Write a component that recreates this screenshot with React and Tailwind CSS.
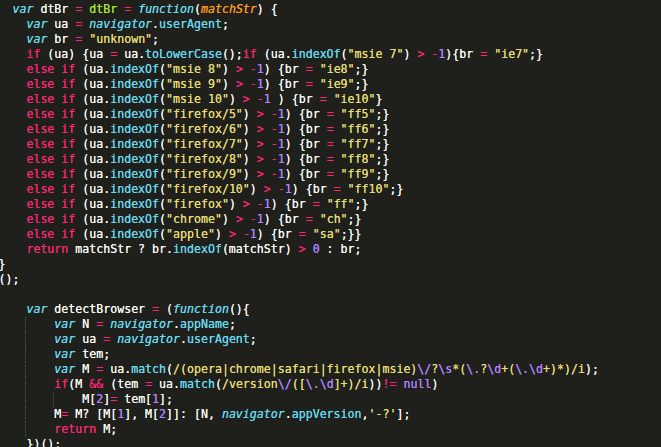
const C = {
  w: 'text-[#f8f8f2]',
  k: 'text-[#f92672]',
  s: 'text-[#e6db74]',
  n: 'text-[#ae81ff]',
  t: 'text-[#66d9ef] italic',
  f: 'text-[#66d9ef]',
  g: 'text-[#a6e22e]',
  p: 'text-[#fd971f] italic',
};

const elseIf = (str, val, tail = ') {br ', end = ';}') => [
  ['w', '    '], ['k', 'else'], ['w', ' '], ['k', 'if'], ['w', ' (ua.'], ['f', 'indexOf'],
  ['w', '('], ['s', str], ['w', ') '], ['k', '>'], ['w', ' '], ['k', '-'], ['n', '1'],
  ['w', tail], ['k', '='], ['w', ' '], ['s', val], ['w', end],
];

// g: number of indent guides drawn inside the leading whitespace
const lines = [
  { t: [['w', '  '], ['t', 'var'], ['w', ' dtBr '], ['k', '='], ['w', ' '], ['g', 'dtBr'], ['w', ' '], ['k', '='], ['w', ' '], ['t', 'function'], ['w', '('], ['p', 'matchStr'], ['w', ') {']] },
  { t: [['w', '    '], ['t', 'var'], ['w', ' ua '], ['k', '='], ['w', ' '], ['t', 'navigator'], ['w', '.'], ['f', 'userAgent'], ['w', ';']] },
  { t: [['w', '    '], ['t', 'var'], ['w', ' br '], ['k', '='], ['w', ' '], ['s', '"unknown"'], ['w', ';']] },
  { t: [['w', '    '], ['k', 'if'], ['w', ' (ua) {ua '], ['k', '='], ['w', ' ua.'], ['f', 'toLowerCase'], ['w', '();'], ['k', 'if'], ['w', ' (ua.'], ['f', 'indexOf'], ['w', '('], ['s', '"msie 7"'], ['w', ') '], ['k', '>'], ['w', ' '], ['k', '-'], ['n', '1'], ['w', '){br '], ['k', '='], ['w', ' '], ['s', '"ie7"'], ['w', ';}']] },
  { t: elseIf('"msie 8"', '"ie8"') },
  { t: elseIf('"msie 9"', '"ie9"') },
  { t: elseIf('"msie 10"', '"ie10"', ' ) {br ', '}') },
  { t: elseIf('"firefox/5"', '"ff5"') },
  { t: elseIf('"firefox/6"', '"ff6"') },
  { t: elseIf('"firefox/7"', '"ff7"') },
  { t: elseIf('"firefox/8"', '"ff8"') },
  { t: elseIf('"firefox/9"', '"ff9"') },
  { t: elseIf('"firefox/10"', '"ff10"') },
  { t: elseIf('"firefox"', '"ff"') },
  { t: elseIf('"chrome"', '"ch"') },
  { t: elseIf('"apple"', '"sa"', ') {br ', ';}}') },
  { t: [['w', '    '], ['k', 'return'], ['w', ' matchStr ? br.'], ['f', 'indexOf'], ['w', '(matchStr) '], ['k', '>'], ['w', ' '], ['n', '0'], ['w', ' : br;']] },
  { t: [['w', '}']] },
  { t: [['w', '();']] },
  { t: [['w', ' ']] },
  { t: [['w', '    '], ['t', 'var'], ['w', ' detectBrowser '], ['k', '='], ['w', ' ('], ['t', 'function'], ['w', '(){']] },
  { g: 1, t: [['t', 'var'], ['w', ' N '], ['k', '='], ['w', ' '], ['t', 'navigator'], ['w', '.'], ['f', 'appName'], ['w', ';']] },
  { g: 1, t: [['t', 'var'], ['w', ' ua '], ['k', '='], ['w', ' '], ['t', 'navigator'], ['w', '.'], ['f', 'userAgent'], ['w', ';']] },
  { g: 1, t: [['t', 'var'], ['w', ' tem;']] },
  { g: 1, t: [['t', 'var'], ['w', ' M '], ['k', '='], ['w', ' ua.'], ['f', 'match'], ['w', '('], ['s', '/(opera|chrome|safari|firefox|msie)'], ['n', '\\/'], ['s', '?'], ['n', '\\s'], ['s', '*('], ['n', '\\.'], ['s', '?'], ['n', '\\d'], ['s', '+('], ['n', '\\.'], ['n', '\\d'], ['s', '+)*)/i'], ['w', ');']] },
  { g: 1, t: [['k', 'if'], ['w', '(M '], ['k', '&&'], ['w', ' (tem '], ['k', '='], ['w', ' ua.'], ['f', 'match'], ['w', '('], ['s', '/version'], ['n', '\\/'], ['s', '(['], ['n', '\\.'], ['n', '\\d'], ['s', ']+)/i'], ['w', '))'], ['k', '!='], ['w', ' '], ['n', 'null'], ['w', ')']] },
  { g: 2, t: [['w', 'M['], ['n', '2'], ['w', ']'], ['k', '='], ['w', ' tem['], ['n', '1'], ['w', '];']] },
  { g: 1, t: [['w', 'M'], ['k', '='], ['w', ' M? [M['], ['n', '1'], ['w', '], M['], ['n', '2'], ['w', ']]: [N, '], ['t', 'navigator'], ['w', '.'], ['f', 'appVersion'], ['w', ','], ['s', "'-?'"], ['w', '];']] },
  { g: 1, t: [['k', 'return'], ['w', ' M;']] },
  { t: [['w', '    })();']] },
];

function Guide() {
  return <span className="inline-block h-[15px] align-top border-l border-dotted border-[#55554d] -ml-px">{'    '}</span>;
}

export default function App() {
  return (
    <div className="w-[661px] h-[447px] overflow-hidden bg-[#1f201c] font-['DejaVu_Sans_Mono',monospace] text-[11.6px] leading-[15px] [text-shadow:0_0_0.35px_currentColor]">
      <div className="ml-[-1.5px] pt-[2px]">
        {lines.map((line, i) => (
          <div key={i} className="h-[15px] whitespace-pre">
            {line.g ? (
              <>
                <span>{'    '}</span>
                <Guide />
                {line.g > 1 && <Guide />}
              </>
            ) : null}
            {line.t.map(([c, txt], j) => (
              <span key={j} className={C[c]}>{txt}</span>
            ))}
          </div>
        ))}
      </div>
    </div>
  );
}
